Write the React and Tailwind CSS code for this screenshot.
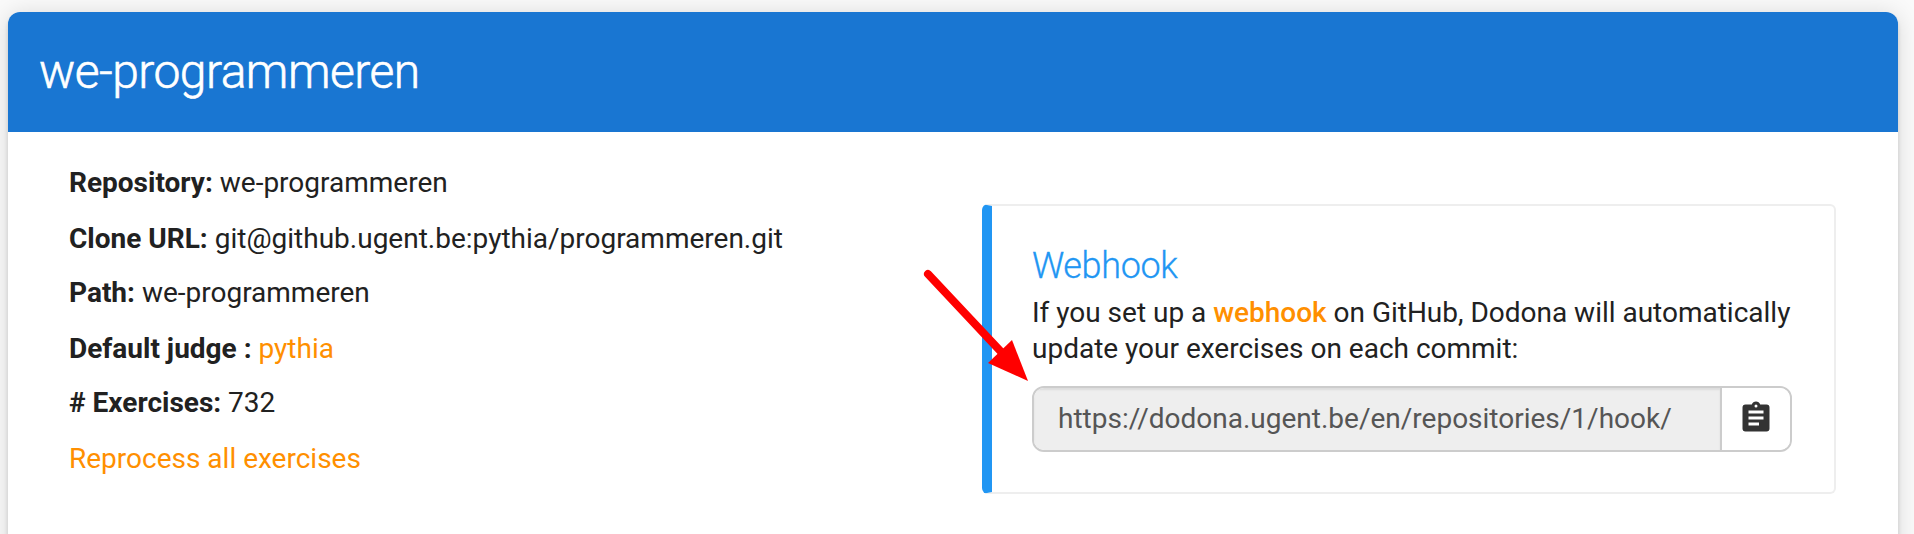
const DETAILS = [
  { label: 'Repository:', value: 'we-programmeren', height: 'h-[55px]' },
  { label: 'Clone URL:', value: 'git@github.ugent.be:pythia/programmeren.git', height: 'h-[55px] pt-px' },
  { label: 'Path:', value: 'we-programmeren', height: 'h-[55px]' },
  { label: 'Default judge :', value: 'pythia', height: 'h-[55px] pt-px', link: true },
  { label: '# Exercises:', value: '732', height: 'h-[56px]' },
];

function ClipboardIcon() {
  return (
    <svg viewBox="0 0 24 24" className="h-9 w-9" fill="#333333" aria-hidden="true">
      <path d="M14,17H7V15H14M17,13H7V11H17M17,9H7V7H17M12,3A1,1 0 0,1 13,4A1,1 0 0,1 12,5A1,1 0 0,1 11,4A1,1 0 0,1 12,3M19,3H14.82C14.4,1.84 13.3,1 12,1C10.7,1 9.6,1.84 9.18,3H5A2,2 0 0,0 3,5V19A2,2 0 0,0 5,21H19A2,2 0 0,0 21,19V5A2,2 0 0,0 19,3Z" />
    </svg>
  );
}

function Arrow() {
  return (
    <svg viewBox="0 0 110 120" className="absolute -left-[69px] top-[59px] h-[120px] w-[110px]" aria-hidden="true">
      <path d="M5 9 L82 91" stroke="#ff0000" strokeWidth="8" strokeLinecap="round" />
      <path d="M105 116 L89 75 L65 98 Z" fill="#ff0000" />
    </svg>
  );
}

function Callout() {
  return (
    <aside className="relative mt-[72px] h-[290px] w-[854px] rounded-md border-2 border-l-[10px] border-[#eeeeee] border-l-[#2196f3] pt-[38px] pr-[42px] pl-10">
      <h4 className="text-[36px] leading-[44px] font-light tracking-[-0.36px] text-[#2196f3] [-webkit-text-stroke:0.3px_#2196f3]">Webhook</h4>
      <p className="mt-[7px] h-[74px] leading-[36px] tracking-[-0.01px] whitespace-nowrap">
        If you set up a <a className="font-medium text-[#ff8f00]">webhook</a> on GitHub, Dodona will automatically
        <br />
        update your exercises on each commit:
      </p>
      <div className="mt-[17px] flex h-[66px] w-[760px] overflow-hidden rounded-xl border-2 border-[#cccccc]">
        <div className="flex flex-1 items-center bg-[#eeeeee] pl-6 text-[#555555] shadow-[inset_0_2px_2px_rgba(0,0,0,0.075)]">
          https://dodona.ugent.be/en/repositories/1/hook/
        </div>
        <button className="flex w-[70px] justify-center border-l-2 border-[#cccccc] bg-white pt-3">
          <ClipboardIcon />
        </button>
      </div>
      <Arrow />
    </aside>
  );
}

export default function App() {
  return (
    <div className="h-[534px] overflow-hidden bg-[#fafafa] pt-3 pl-2 font-['Roboto',sans-serif] text-[28px] text-[#212121]">
      <main className="h-[700px] w-[1890px] rounded-xl bg-white shadow-[0_4px_4px_0_rgba(0,0,0,0.14),0_6px_2px_-4px_rgba(0,0,0,0.12),0_2px_24px_0_rgba(0,0,0,0.14)]">
        <header className="flex h-[120px] items-center rounded-t-xl bg-[#1976d2] pl-[31px]">
          <h2 className="text-[48px] leading-[56px] font-light tracking-[-0.53px] text-white [-webkit-text-stroke:0.6px_white]">we-programmeren</h2>
        </header>
        <div className="flex justify-between pr-[62px] pl-[61px]">
          <section className="flex flex-col pt-[23px] leading-[55px]">
            {DETAILS.map((item) => (
              <p key={item.label} className={item.height}>
                <b className="font-bold">{item.label}</b>{' '}
                {item.link ? <a className="text-[#ff8f00]">{item.value}</a> : item.value}
              </p>
            ))}
            <a className="text-[#ff8f00]">Reprocess all exercises</a>
          </section>
          <Callout />
        </div>
      </main>
    </div>
  );
}
